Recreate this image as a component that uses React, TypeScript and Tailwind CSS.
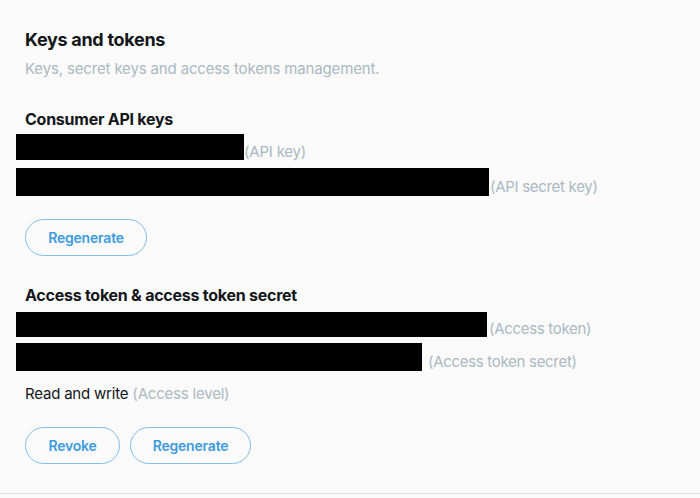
import React from "react";

const font = { fontFamily: "Inter, 'Liberation Sans', sans-serif" };

export default function App() {
  return (
    <div
      className="w-[700px] h-[498px] bg-[#fafafa] relative overflow-hidden text-[#14171a]"
      style={font}
    >
      <div className="pl-4 pt-[28px]">
        <h1 className="ml-[9px] text-[18px] leading-[23px] font-bold tracking-[-0.3px]">Keys and tokens</h1>
        <p className="ml-[9px] mt-[8px] text-[15px] leading-[20px] text-[#aab8c2] tracking-[-0.15px]">
          Keys, secret keys and access tokens management.
        </p>

        <h2 className="ml-[9px] mt-[30px] text-[16px] leading-[20px] font-bold tracking-[-0.25px]">Consumer API keys</h2>
        <div className="mt-[5px] flex flex-col gap-[8px]">
          <div className="flex items-end">
            <div className="bg-black w-[228px] h-[26px]" />
            <span className="text-[15px] leading-[20px] text-[#aab8c2] tracking-[-0.2px] -mb-[2px]">(API key)</span>
          </div>
          <div className="flex items-end">
            <div className="bg-black w-[473px] h-[28px]" />
            <span className="text-[15px] leading-[20px] text-[#aab8c2] tracking-[-0.3px] ml-[1px] -mb-[1px]">(API secret key)</span>
          </div>
        </div>
        <div className="mt-[23px] ml-[9px]">
          <button className="h-[37px] w-[122px] rounded-full border border-[#80bfea] text-[#3d9be0] text-[14px] font-semibold tracking-[-0.2px]">
            Regenerate
          </button>
        </div>

        <h2 className="ml-[9px] mt-[29px] text-[16px] leading-[20px] font-bold tracking-[-0.25px]">
          Access token &amp; access token secret
        </h2>
        <div className="mt-[7px] flex flex-col gap-[6px]">
          <div className="flex items-end">
            <div className="bg-black w-[471px] h-[25px]" />
            <span className="text-[15px] leading-[20px] text-[#aab8c2] tracking-[-0.3px] ml-[2px] -mb-[2px]">(Access token)</span>
          </div>
          <div className="flex items-end">
            <div className="bg-black w-[406px] h-[28px]" />
            <span className="text-[15px] leading-[20px] text-[#aab8c2] tracking-[-0.3px] ml-[6px] -mb-[1px]">(Access token secret)</span>
          </div>
        </div>
        <p className="ml-[9px] mt-[13px] text-[15px] leading-[20px] tracking-[-0.2px]">
          Read and write <span className="text-[#aab8c2]">(Access level)</span>
        </p>
        <div className="mt-[23px] ml-[9px] flex gap-[10px]">
          <button className="h-[37px] w-[95px] rounded-full border border-[#80bfea] text-[#3d9be0] text-[14px] font-semibold tracking-[-0.2px]">
            Revoke
          </button>
          <button className="h-[37px] w-[121px] rounded-full border border-[#80bfea] text-[#3d9be0] text-[14px] font-semibold tracking-[-0.2px]">
            Regenerate
          </button>
        </div>
      </div>
      <div className="absolute left-0 right-0 top-[493px] h-px bg-[#dcdcdc]" />
    </div>
  );
}
